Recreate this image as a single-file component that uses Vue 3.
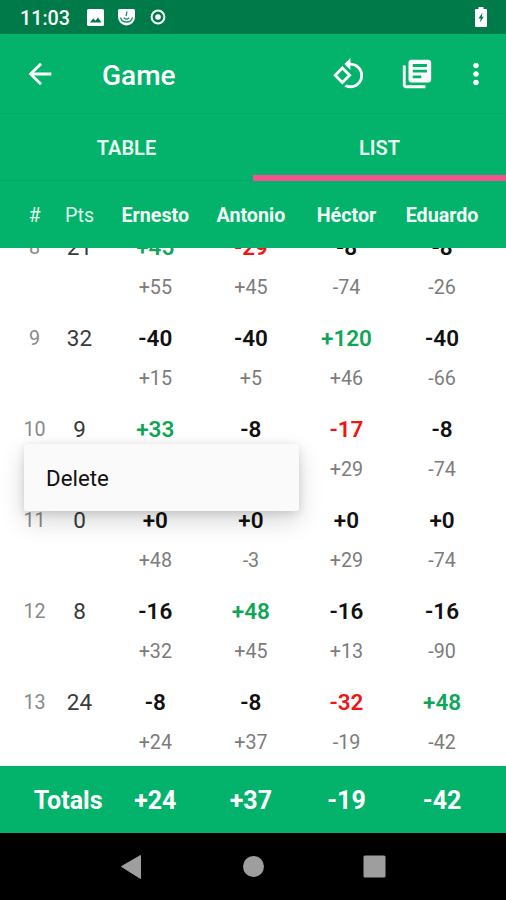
<script setup>
import { ref } from 'vue';

const tabs = ['TABLE', 'LIST'];
const activeTab = ref('LIST');
const players = ['Ernesto', 'Antonio', 'Héctor', 'Eduardo'];
const rounds = ref([
    { id: 8, pts: 21, scores: [45, -29, -8, -8], sums: [55, 45, -74, -26] },
    { id: 9, pts: 32, scores: [-40, -40, 120, -40], sums: [15, 5, 46, -66] },
    { id: 10, pts: 9, scores: [33, -8, -17, -8], sums: [48, -3, 29, -74] },
    { id: 11, pts: 0, scores: [0, 0, 0, 0], sums: [48, -3, 29, -74] },
    { id: 12, pts: 8, scores: [-16, 48, -16, -16], sums: [32, 45, 13, -90] },
    { id: 13, pts: 24, scores: [-8, -8, -32, 48], sums: [24, 37, -19, -42] },
]);
const totals = [24, 37, -19, -42];

const signed = (n) => (n < 0 ? `${n}` : `+${n}`);

// winner in green, the player who dealt the points in red
const scoreClass = (round, score) => {
    if (score > 0) return 'win';
    const others = round.scores.filter((s) => s < 0);
    const min = Math.min(...round.scores);
    return score === min && others.some((s) => s !== min) ? 'lose' : '';
}
</script>

<template>
    <div class="screen">
        <div class="status">
            <span class="clock">11:03</span>
            <svg class="s-img" width="17" height="17" viewBox="0 0 17 17">
                <path fill="#fff" fill-rule="evenodd" d="M1.5 0h14A1.5 1.5 0 0 1 17 1.5v14a1.5 1.5 0 0 1-1.5 1.5h-14A1.5 1.5 0 0 1 0 15.5v-14A1.5 1.5 0 0 1 1.5 0zM3 13.5h11.5L11 8.5l-2.5 3.3L6.300 9.5z" />
            </svg>
            <svg class="s-face" width="17" height="17" viewBox="0 0 17 17">
                <path fill="#fff" d="M1.5 0h14q1.5 0 1.5 1.5V8a8.500 8.500 0 0 1-17 0V1.5Q0 0 1.500 0z" />
                <path fill="none" stroke="#2b8f63" stroke-width="1.3" d="M2.500 8.500c1.500 6 10.500 6 12 0" />
                <path fill="none" stroke="#2b8f63" stroke-width="1.3" d="M9 2.500L8 7M5.800 8.800q2.700 2.700 5.400 0" />
            </svg>
            <svg class="s-ring" width="16" height="16" viewBox="0 0 16 16">
                <circle cx="8" cy="8" r="6.4" fill="none" stroke="#fff" stroke-width="2" />
                <circle cx="8" cy="8" r="2.8" fill="#fff" />
            </svg>
            <svg class="s-bat" width="12" height="20" viewBox="0 0 12 20">
                <path fill="#fff" d="M3.5 0h5v2H11q1 0 1 1v16q0 1-1 1H1q-1 0-1-1V3q0-1 1-1h2.500z" />
                <path fill="#007a48" d="M7.500 5.500L3.500 11.500h2.200L5 15.500 8.800 9.800H6.800z" />
            </svg>
        </div>

        <div class="appbar">
            <svg class="icon" viewBox="0 0 24 24"><path d="M20 11H7.830l5.590-5.590L12 4l-8 8 8 8 1.410-1.410L7.830 13H20v-2z" /></svg>
            <span class="title">Game</span>
            <svg class="icon rotate" viewBox="0 0 24 24"><path d="M7.340 6.410L.86 12.900l6.490 6.480 6.490-6.480-6.500-6.490zM3.690 12.900l3.660-3.660L11 12.900l-3.660 3.660-3.650-3.660zm15.670-6.260C17.610 4.880 15.300 4 13 4V.76L8.760 5 13 9.240V6c1.790 0 3.580.68 4.950 2.050 2.730 2.730 2.730 7.170 0 9.900C16.580 19.320 14.790 20 13 20c-.97 0-1.940-.21-2.840-.61l-1.490 1.490C10.020 21.620 11.510 22 13 22c2.300 0 4.610-.88 6.360-2.640 3.520-3.510 3.520-9.210 0-12.720z" /></svg>
            <svg class="icon books" viewBox="0 0 24 24"><path d="M4 6H2v14c0 1.100.9 2 2 2h14v-2H4V6zm16-4H8c-1.100 0-2 .9-2 2v12c0 1.100.9 2 2 2h12c1.100 0 2-.9 2-2V4c0-1.100-.9-2-2-2zm-1 9H9V9h10v2zm-4 4H9v-2h6v2zm4-8H9V5h10v2z" /></svg>
            <svg class="icon more" viewBox="0 0 24 24"><path d="M12 8c1.100 0 2-.9 2-2s-.9-2-2-2-2 .9-2 2 .9 2 2 2zm0 2c-1.100 0-2 .9-2 2s.9 2 2 2 2-.9 2-2-.9-2-2-2zm0 6c-1.100 0-2 .9-2 2s.9 2 2 2 2-.9 2-2-.9-2-2-2z" /></svg>
        </div>

        <div class="tabs">
            <div v-for="tab in tabs" :key="tab" class="tab" :class="{ active: tab === activeTab }" @click="activeTab = tab">{{ tab }}</div>
        </div>

        <div class="cols head">
            <span class="light">#</span>
            <span class="light">Pts</span>
            <span v-for="player in players" :key="player">{{ player }}</span>
        </div>

        <div class="list">
            <div class="round" v-for="round in rounds" :key="round.id">
                <div class="cols main">
                    <span class="num">{{ round.id }}</span>
                    <span class="pts">{{ round.pts }}</span>
                    <span v-for="(score, i) in round.scores" :key="i" :class="scoreClass(round, score)">{{ signed(score) }}</span>
                </div>
                <div class="cols sub">
                    <span></span>
                    <span></span>
                    <span v-for="(sum, i) in round.sums" :key="i">{{ signed(sum) }}</span>
                </div>
            </div>
        </div>

        <div class="cols totals">
            <span class="label">Totals</span>
            <span v-for="(total, i) in totals" :key="i">{{ signed(total) }}</span>
        </div>

        <div class="nav">
            <svg width="506" height="67" viewBox="0 0 506 67" fill="#9e9e9e">
                <path d="M121.500 33.500L140.500 22.500v23z" stroke="#9e9e9e" stroke-linejoin="round" />
                <circle cx="253.500" cy="33.500" r="10.500" />
                <rect x="363.500" y="22.500" width="22" height="22" rx="1.500" />
            </svg>
        </div>

        <div class="menu">Delete</div>
    </div>
</template>

<style>
body {
    margin: 0;
}
</style>

<style scoped>
.screen {
    position: relative;
    display: flex;
    flex-direction: column;
    width: 506px;
    height: 900px;
    overflow: hidden;
    background: #fff;
    font-family: Roboto, "Liberation Sans", sans-serif;
}

.status {
    display: flex;
    align-items: center;
    height: 34px;
    flex: none;
    box-sizing: border-box;
    padding: 0 19px 0 20px;
    background: #007a48;
    color: #fff;
}

.clock {
    width: 67px;
    font-size: 19.7px;
    font-weight: 500;
    padding-top: 2px;
}

.s-face {
    margin-left: 14px;
}

.s-ring {
    margin-left: 15px;
}

.s-bat {
    margin-left: auto;
}

.appbar {
    display: flex;
    align-items: center;
    height: 79px;
    flex: none;
    box-sizing: border-box;
    padding: 0 13px 0 23px;
    background: #03b26b;
    color: #fff;
}

.icon {
    width: 34px;
    height: 34px;
    flex: none;
    fill: #fff;
}

.rotate {
    margin-right: -1px;
}

.books {
    margin-left: 34.500px;
}

.more {
    margin-left: 25.500px;
}

.title {
    flex: 1;
    padding: 3px 0 0 45px;
    font-size: 28px;
    font-weight: 500;
}

.tabs {
    display: flex;
    height: 68px;
    flex: none;
    box-sizing: border-box;
    border-top: 1px solid #02a865;
    background: #03b26b;
}

.tab {
    flex: 1;
    box-sizing: border-box;
    height: 67px;
    line-height: 68px;
    border-bottom: 1px solid #02a865;
    text-align: center;
    color: #e9f9f1;
    font-size: 20px;
    font-weight: 600;
}

.tab.active {
    border-bottom: 6px solid #f9508f;
}

.cols {
    display: grid;
    grid-template-columns: 34px 56px repeat(4, 95.6px);
    padding-left: 17.5px;
    text-align: center;
    white-space: nowrap;
}

.head {
    height: 67px;
    line-height: 70px;
    flex: none;
    background: #03b26b;
    color: #f2fcf7;
    font-size: 19.7px;
    font-weight: 700;
}

.light {
    font-weight: 400;
    color: #dff6eb;
}

.list {
    flex: 1;
    min-height: 0;
    overflow: hidden;
}

.round {
    height: 91px;
}

.round:first-child {
    margin-top: -23px;
}

.main {
    height: 44px;
    line-height: 44px;
    color: #111;
    font-size: 22.5px;
    font-weight: 600;
}

.main .num {
    padding-top: 1px;
    color: #8a8a8a;
    font-size: 19.7px;
    font-weight: 400;
}

.main .pts {
    color: #3a3a3a;
    font-weight: 400;
}

.main .win {
    color: #0fa658;
}

.main .lose {
    color: #f21313;
}

.sub {
    height: 36px;
    line-height: 38px;
    color: #7c7c7c;
    font-size: 19.7px;
}

.totals {
    height: 67px;
    line-height: 70px;
    flex: none;
    background: #03b26b;
    color: #fff;
    font-size: 25px;
    font-weight: 700;
}

.label {
    grid-column: span 2;
    text-align: right;
    padding-right: 5px;
}

.nav {
    height: 67px;
    flex: none;
    background: #000;
}

.menu {
    position: absolute;
    left: 24px;
    top: 444px;
    width: 275px;
    height: 67px;
    line-height: 68px;
    box-sizing: border-box;
    padding-left: 22px;
    background: #fafafa;
    border-radius: 2px;
    box-shadow: 0 10px 24px rgba(0, 0, 0, .16), 0 2px 8px rgba(0, 0, 0, .12);
    color: #111;
    font-size: 22.3px;
}
</style>
